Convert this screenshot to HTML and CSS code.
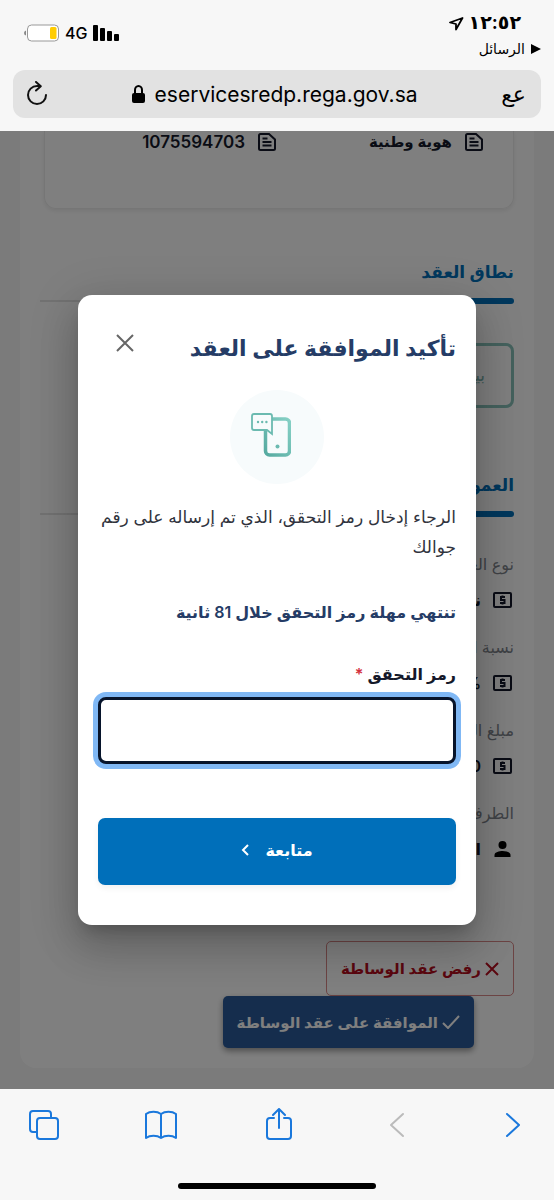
FILE: index.html
```html
<!DOCTYPE html>
<html lang="ar" dir="rtl">
<head>
<meta charset="utf-8">
<meta name="viewport" content="width=device-width, initial-scale=1">
<title>تأكيد الموافقة على العقد</title>
<link rel="stylesheet" href="styles.css">
</head>
<body>
<svg class="symbols" aria-hidden="true">
  <symbol id="doc" viewBox="0 0 18 18"><path d="M2.500 1h8.500L17 6.500V15.500q0 1.500-1.500 1.500h-13Q1 17 1 15.500v-13Q1 1 2.500 1zM4.500 5.500h5M4.500 9h9M4.500 12.500h9" fill="none" stroke="currentColor" stroke-width="2"/></symbol>
  <symbol id="cash" viewBox="0 0 19 16"><rect x="1" y="1" width="17" height="14" rx="1" fill="none" stroke="currentColor" stroke-width="2"/><path d="M12 5H8v3h3.500v3H7M9.500 3.500V5M9.500 11v1.500" fill="none" stroke="currentColor" stroke-width="2"/></symbol>
  <symbol id="person" viewBox="0 0 16 16"><circle cx="8" cy="4" r="4"/><path d="M0 16v-2c0-3 5-4 8-4s8 1 8 4v2z"/></symbol>
</svg>

<header class="browser-top" dir="ltr">
  <div class="status">
    <div class="status-left">
      <svg width="35" height="18" viewBox="0 0 35 18" aria-hidden="true"><path d="M2 6.500v5Q0 11 0 9t2-2.500z" fill="#888"/><rect x="3.500" y="1" width="31" height="16" rx="4" fill="#fff" stroke="#999"/><rect x="26" y="3" width="6.500" height="12" rx="1.500" fill="#fc0"/></svg>
      <span class="network">4G</span>
      <svg width="26" height="16" viewBox="0 0 26 16" aria-hidden="true"><rect width="5" height="16" rx="1"/><rect x="7" y="3" width="5" height="13" rx="1"/><rect x="14" y="6" width="5" height="10" rx="1"/><rect x="21" y="9" width="5" height="7" rx="1"/></svg>
    </div>
    <div class="status-right">
      <div class="clock"><svg width="15" height="15" viewBox="0 0 15 15" aria-hidden="true"><path d="M13.500 2L1 6.500l6 1.500 0 5.500z" fill="none" stroke="#000" stroke-width="1.800" stroke-linejoin="round"/></svg><span>١٢:٥٢</span></div>
      <div class="back-app"><span>الرسائل</span><svg width="10" height="10" viewBox="0 0 10 10" aria-hidden="true"><path d="M0 0l10 5-10 5z"/></svg></div>
    </div>
  </div>
  <div class="address">
    <button class="plain" type="button" aria-label="إعادة التحميل"><svg width="22" height="26" viewBox="0 0 22 26" fill="none" stroke="#111" stroke-width="2" stroke-linecap="round" stroke-linejoin="round"><path d="M20 14a9 9 0 1 1-9-9h3.500M10 1l4.800 4.200L10 9.500"/></svg></button>
    <button class="plain url" type="button"><svg width="13" height="18" viewBox="0 0 13 18" aria-hidden="true"><rect y="8" width="13" height="10" rx="2"/><path d="M3 9V5a3.500 4 0 0 1 7 0v4" fill="none" stroke="#000" stroke-width="2"/></svg><span>eservicesredp.rega.gov.sa</span></button>
    <button class="plain reader" type="button">عع</button>
  </div>
</header>

<main class="view">
  <div class="sheet">
    <section class="card">
      <div class="cell"><svg width="18" height="18"><use href="#doc"/></svg><span>هوية وطنية</span></div>
      <div class="cell number"><svg width="18" height="18"><use href="#doc"/></svg><span>1075594703</span></div>
    </section>

    <h2 class="section-title">نطاق العقد</h2>
    <div class="rule"></div>
    <div class="scope">بيع</div>

    <h2 class="section-title">العمولة</h2>
    <div class="rule"></div>
    <dl class="facts">
      <div><dt>نوع العمولة</dt><dd><svg width="19" height="16"><use href="#cash"/></svg><span>نسبة</span></dd></div>
      <div><dt>نسبة العمولة</dt><dd><svg width="19" height="16"><use href="#cash"/></svg><span>%</span></dd></div>
      <div><dt>مبلغ العمولة</dt><dd><svg width="19" height="16"><use href="#cash"/></svg><span>0</span></dd></div>
      <div><dt>الطرف الدافع</dt><dd><svg width="19" height="16"><use href="#person"/></svg><span>المالك</span></dd></div>
    </dl>

    <div class="actions">
      <button class="reject" type="button"><svg width="14" height="14" viewBox="0 0 14 14" fill="none" stroke="currentColor" stroke-width="2"><path d="M1 1l12 12M13 1L1 13"/></svg><span>رفض عقد الوساطة</span></button>
      <button class="approve" type="button"><svg width="18" height="14" viewBox="0 0 18 14" fill="none" stroke="currentColor" stroke-width="2"><path d="M1 8l5 5L17 1"/></svg><span>الموافقة على عقد الوساطة</span></button>
    </div>
  </div>

  <div class="backdrop">
    <form class="dialog" role="dialog" aria-modal="true" aria-labelledby="dialog-title">
      <div class="dialog-head">
        <h1 id="dialog-title">تأكيد الموافقة على العقد</h1>
        <button class="plain close" type="button" aria-label="إغلاق"><svg width="18" height="18" viewBox="0 0 18 18" fill="none" stroke="#666" stroke-width="2"><path d="M1 1l16 16M17 1L1 17"/></svg></button>
      </div>
      <div class="badge">
        <svg width="40" height="44" viewBox="0 0 40 44" fill="none" aria-hidden="true">
          <defs><linearGradient id="teal" x1="0" y1="1" x2="1" y2="0"><stop stop-color="#56aaa0"/><stop offset="1" stop-color="#86d0c5"/></linearGradient></defs>
          <rect x="14.500" y="6" width="24" height="36" rx="4" stroke="url(#teal)" stroke-width="3.500"/>
          <path d="M3 1h16q2 0 2 2v18l-5-4H3q-2 0-2-2V3q0-2 2-2z" fill="#f7fbfc" stroke="#6bbab0" stroke-width="1.800"/>
          <g fill="#6bbab0"><circle cx="7" cy="9" r="1.200"/><circle cx="11.200" cy="9" r="1.200"/><circle cx="15.400" cy="9" r="1.200"/><circle cx="26.500" cy="33.500" r="2"/></g>
        </svg>
      </div>
      <p class="message">الرجاء إدخال رمز التحقق، الذي تم إرساله على رقم جوالك</p>
      <p class="timer">تنتهي مهلة رمز التحقق خلال 81 ثانية</p>
      <label for="code">رمز التحقق <span class="required">*</span></label>
      <input id="code" type="text" inputmode="numeric" autocomplete="one-time-code">
      <button class="submit" type="submit"><span>متابعة</span><svg width="8" height="12" viewBox="0 0 8 12" fill="none" stroke="currentColor" stroke-width="2"><path d="M7 1L2 6l5 5"/></svg></button>
    </form>
  </div>
</main>

<footer class="browser-bottom" dir="ltr">
  <nav class="tools">
    <button class="plain" type="button" aria-label="علامات التبويب"><svg width="32" height="34" viewBox="0 0 32 34"><path d="M8 24H5q-3 0-3-3V6q0-3 3-3h15q3 0 3 3v3"/><rect x="9" y="10" width="21" height="21" rx="3"/></svg></button>
    <button class="plain" type="button" aria-label="الإشارات المرجعية"><svg width="32" height="34" viewBox="0 0 32 34"><path d="M16 6C12 3 5 3 1 6v24c4-3 11-3 15 0 4-3 11-3 15 0V6c-4-3-11-3-15 0zM16 6v24"/></svg></button>
    <button class="plain" type="button" aria-label="مشاركة"><svg width="32" height="34" viewBox="0 0 32 34"><path d="M12 10H8q-3 0-3 3v15q0 3 3 3h18q3 0 3-3V13q0-3-3-3h-4M17 20V1M11 7l6-6 6 6"/></svg></button>
    <button class="plain" type="button" aria-label="السابق" disabled><svg width="32" height="34" viewBox="0 0 32 34"><path d="M24 6L12 17l12 11"/></svg></button>
    <button class="plain" type="button" aria-label="التالي"><svg width="32" height="34" viewBox="0 0 32 34"><path d="M11 6l12 11-12 11"/></svg></button>
  </nav>
  <div class="home-bar"></div>
</footer>
</body>
</html>
```
FILE: styles.css
```css
* { box-sizing: border-box; }

body {
  margin: 0;
  min-height: 100vh;
  display: flex;
  flex-direction: column;
  background: #f7f7f7;
  color: #15192a;
  font-family: Inter, "DejaVu Sans", sans-serif;
  font-size: 16px;
}

h1, h2, p, dl, dd { margin: 0; }
button, input { font: inherit; color: inherit; }
svg { flex: none; display: block; }
.symbols { position: absolute; width: 0; height: 0; }
.plain { padding: 0; border: 0; background: none; }

/* Browser chrome */
.browser-top { padding: 0 13px 13px; color: #000; }
.status {
  height: 70px;
  padding: 10px 0 0 11px;
  display: flex;
  justify-content: space-between;
}
.status-left { display: flex; align-items: center; gap: 6px; height: 46px; }
.network { font-size: 16px; font-weight: 500; }
.status-right { display: flex; flex-direction: column; align-items: flex-end; }
.clock {
  display: flex;
  align-items: center;
  gap: 5px;
  margin-right: 20px;
  font-size: 19px;
  font-weight: 600;
  line-height: 26px;
}
.back-app {
  display: flex;
  align-items: center;
  gap: 6px;
  font-size: 14px;
  line-height: 26px;
}
.address {
  height: 48px;
  padding: 0 15px 0 13px;
  display: flex;
  align-items: center;
  justify-content: space-between;
  border-radius: 12px;
  background: #e2e2e2;
}
.url { display: flex; align-items: center; gap: 10px; font-size: 21px; }
.reader { font-size: 22px; }

/* Page behind the dialog */
.view {
  position: relative;
  flex: 1;
  overflow: hidden;
  padding: 0 20px 21px;
  background: #f6f6f6;
}
.sheet {
  padding: 0 20px 20px;
  border-radius: 0 0 16px 16px;
  background: #fff;
}
.card {
  margin-left: 4px;
  padding: 0 30px 55px 0;
  display: grid;
  grid-template-columns: 207px 1fr;
  border: 1px solid #ececec;
  border-top: 0;
  border-radius: 0 0 12px 12px;
  box-shadow: 0 2px 4px rgba(0, 0, 0, .08);
}
.cell {
  display: flex;
  align-items: center;
  gap: 13px;
  font-size: 15px;
  font-weight: 600;
  line-height: 22px;
}
.number { font-size: 17px; }
.section-title {
  margin-top: 48px;
  color: #0070ba;
  font-size: 17px;
  font-weight: 600;
  line-height: 30px;
}
.rule { height: 6px; margin-top: 11px; display: flex; align-items: center; }
.rule::before {
  content: "";
  width: 94px;
  height: 6px;
  border-radius: 3px;
  background: #0070ba;
}
.rule::after { content: ""; flex: 1; height: 2px; background: #e4e4e4; }
.scope {
  width: 120px;
  height: 65px;
  margin: 39px 0 62px;
  padding: 0 26px;
  border: 3px solid #8ac5bd;
  border-radius: 8px;
  color: #7fb5af;
  font-size: 17px;
  line-height: 58px;
}
.scope + .section-title { margin-top: 0; }
.facts { display: grid; gap: 23px; margin-top: 35px; line-height: 24px; }
.facts dt { color: #80858d; }
.facts dd {
  margin-top: 12px;
  padding-right: 2px;
  display: flex;
  align-items: center;
  gap: 12px;
  font-weight: 600;
}
.actions {
  margin-top: 80px;
  display: flex;
  flex-direction: column;
  align-items: flex-start;
}
.actions button {
  display: flex;
  align-items: center;
  justify-content: center;
  gap: 4px;
  border-radius: 5px;
  font-size: 15px;
  font-weight: 600;
}
.reject {
  height: 55px;
  padding: 0 14px;
  border: 1px solid #d98888;
  background: none;
  color: #b60f20;
}
.approve {
  height: 52px;
  margin-right: 40px;
  padding: 0 14px;
  border: 0;
  background: #2b5b9b;
  color: #fff;
  box-shadow: 0 3px 6px rgba(0, 0, 0, .4);
}

/* Dialog */
.backdrop {
  position: absolute;
  inset: 0;
  display: flex;
  align-items: center;
  justify-content: center;
  padding: 0 78px;
  background: rgba(0, 0, 0, .5);
}
.dialog {
  flex: 1;
  padding: 33px 20px 40px;
  display: flex;
  flex-direction: column;
  border-radius: 14px;
  background: #fff;
  box-shadow: 0 11px 15px -7px rgba(0, 0, 0, .2), 0 24px 38px 3px rgba(0, 0, 0, .14), 0 9px 46px 8px rgba(0, 0, 0, .12);
}
.dialog-head { display: flex; justify-content: space-between; align-items: flex-start; }
.dialog-head h1 { color: #253c66; font-size: 22px; font-weight: 600; line-height: 40px; }
.close { padding: 6px 18px; }
.badge {
  width: 94px;
  height: 94px;
  margin: 22px auto 18px;
  padding: 0 12px 4px 0;
  display: flex;
  align-items: center;
  justify-content: center;
  border-radius: 50%;
  background: #f7fbfc;
}
.message { color: #30333d; font-size: 17px; line-height: 30px; }
.timer {
  margin-top: 35px;
  color: #253c66;
  font-size: 16px;
  font-weight: 600;
  line-height: 30px;
}
.dialog label { margin-top: 32px; font-size: 16px; font-weight: 600; line-height: 30px; }
.required { color: #d3303c; }
.dialog input {
  width: 100%;
  height: 67px;
  margin-top: 8px;
  padding: 0 16px;
  border: 3px solid #07142b;
  border-radius: 8px;
  outline: 0;
  background: #fff;
  box-shadow: 0 0 0 5px #80b8f5;
}
.submit {
  height: 67px;
  margin-top: 54px;
  padding: 0 0 4px;
  display: flex;
  align-items: center;
  justify-content: center;
  gap: 16px;
  border: 0;
  border-radius: 7px;
  background: #006fba;
  color: #fff;
  font-weight: 600;
  box-shadow: 0 3px 6px rgba(0, 0, 0, .06);
}

/* Browser toolbar */
.browser-bottom { height: 111px; padding-bottom: 11px; display: flex; flex-direction: column; justify-content: space-between; }
.tools { display: flex; justify-content: space-between; padding: 19px 26px 0 28px; color: #1a78dc; }
.tools svg { fill: none; stroke: currentColor; stroke-width: 2; stroke-linecap: round; stroke-linejoin: round; }
.tools button:disabled { color: #bbb; }
.home-bar { width: 198px; height: 6px; margin: 0 auto; border-radius: 3px; background: #000; }
```
